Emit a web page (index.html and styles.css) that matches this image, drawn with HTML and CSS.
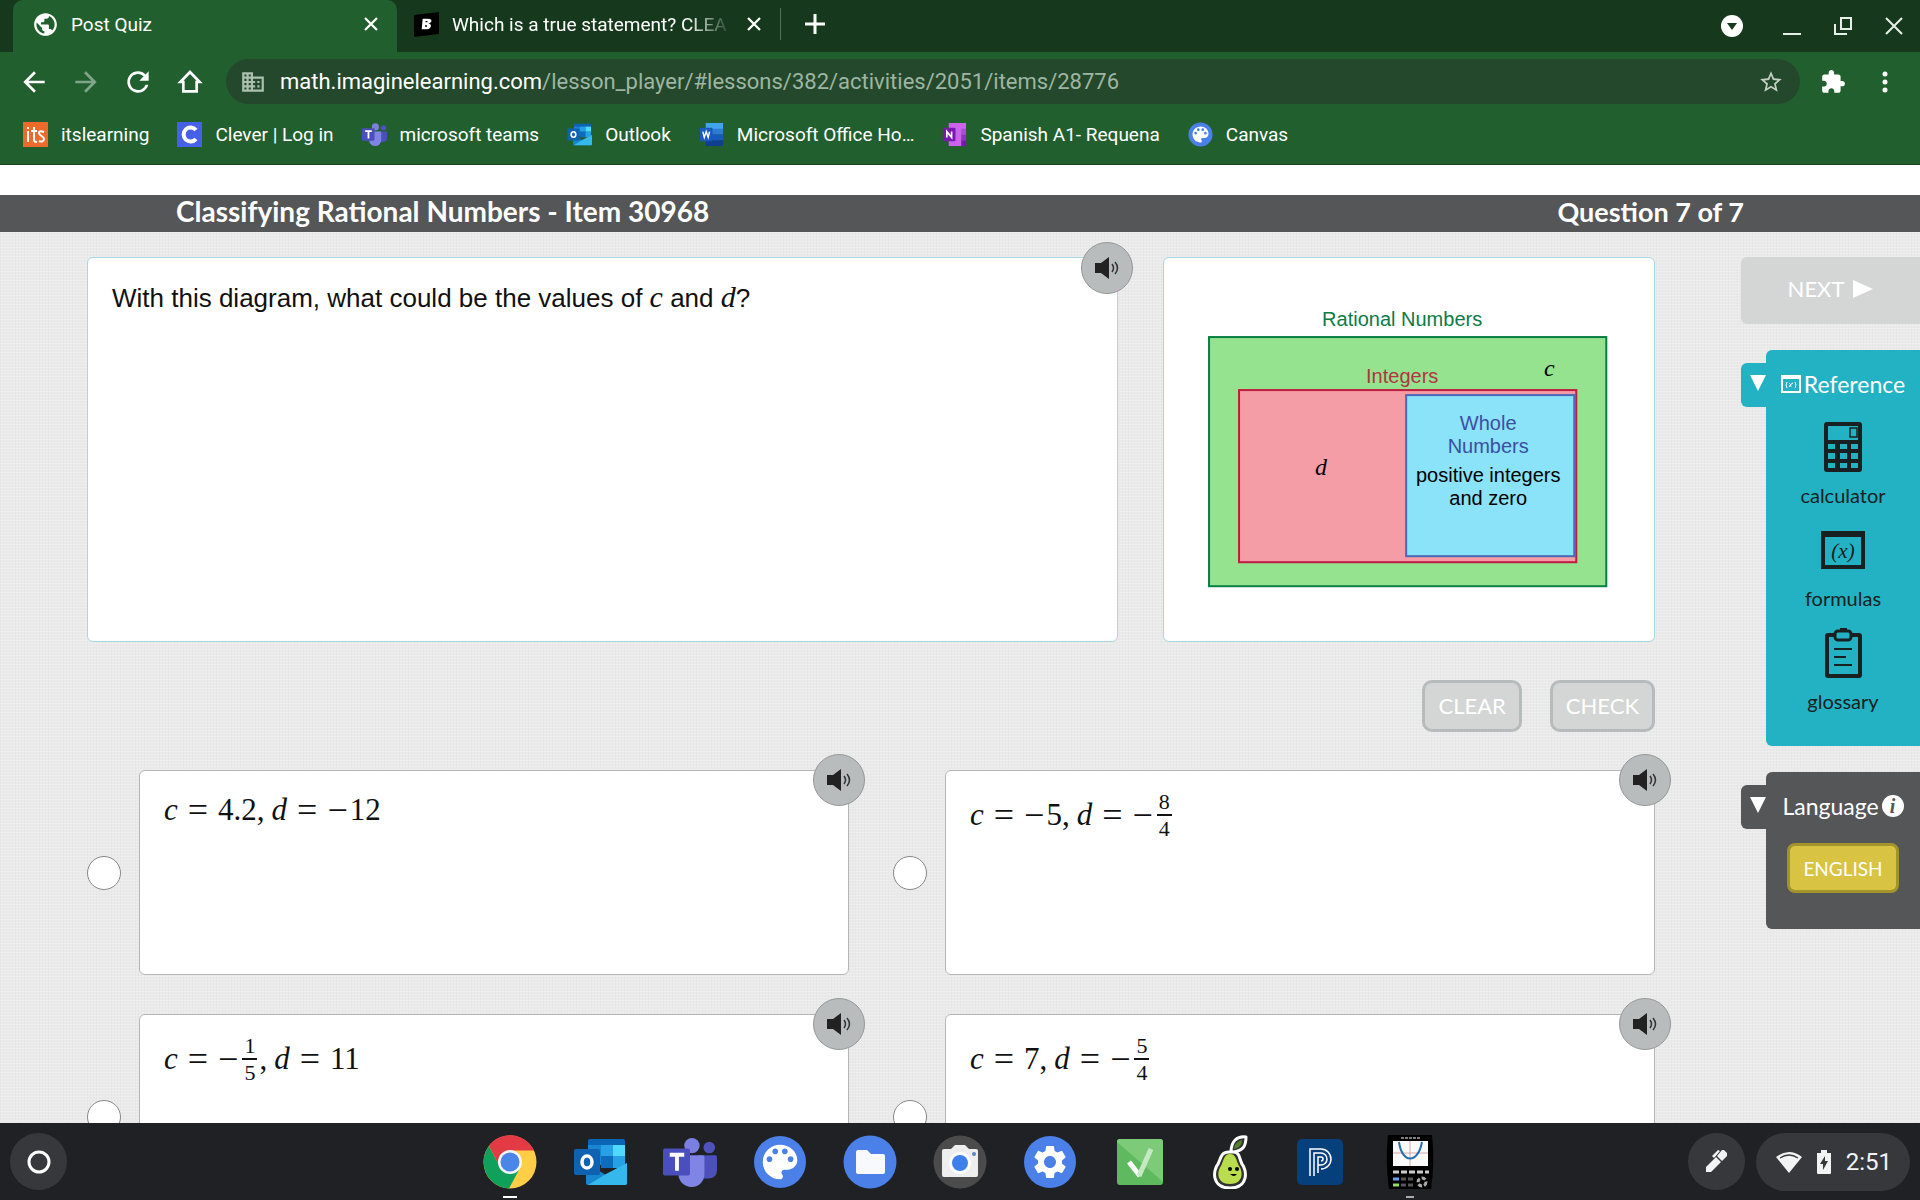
FILE: index.html
```
<!DOCTYPE html>
<html lang="en">
<head>
    <meta charset="UTF-8">
    <meta name="viewport" content="width=device-width, initial-scale=1.0">
    <title>Post Quiz</title>
    <link rel="stylesheet" href="styles.css">
</head>
<body>
    <!-- Shared icons -->
    <svg class="symbols" aria-hidden="true">
        <symbol id="close" viewBox="0 0 24 24"><path d="M4 4L20 20M20 4L4 20" stroke="currentColor" stroke-width="3"/></symbol>
        <symbol id="speaker" viewBox="0 0 26 26">
            <path d="M1 8h6l8-6v22l-8-6H1z" fill="#222"/>
            <path d="M18 9q3 4 0 8M21 7q5 6 0 12" fill="none" stroke="#333" stroke-width="1.5"/>
        </symbol>
        <symbol id="palette" viewBox="0 0 54 54">
            <circle cx="27" cy="27" r="26" fill="#4a80e8"/>
            <path transform="translate(4 4) scale(1.92)" fill="#fff" d="M12 3c-4.97 0-9 4.03-9 9s4.03 9 9 9c.83 0 1.5-.67 1.5-1.5 0-.39-.15-.74-.39-1.01-.23-.26-.38-.61-.38-.99 0-.83.67-1.5 1.5-1.5H16c2.76 0 5-2.24 5-5 0-4.42-4.03-8-9-8zm-5.5 9c-.83 0-1.5-.67-1.5-1.5S5.67 9 6.5 9 8 9.67 8 10.5 7.33 12 6.5 12zm3-4C8.67 8 8 7.33 8 6.5S8.67 5 9.5 5s1.5.67 1.5 1.5S10.33 8 9.5 8zm5 0c-.83 0-1.5-.67-1.5-1.5S13.67 5 14.5 5s1.5.67 1.5 1.5S15.33 8 14.5 8zm3 4c-.83 0-1.5-.67-1.5-1.5S16.67 9 17.5 9s1.5.67 1.5 1.5-.67 1.5-1.5 1.5z"/>
        </symbol>
        <symbol id="outlook" viewBox="0 0 54 54">
            <path fill="#0a66b5" d="M17 4h33a2 2 0 0 1 2 2v8H15V6a2 2 0 0 1 2-2z"/>
            <path fill="#1a85d3" d="M15 10h13v20H15z"/><path fill="#28a0e6" d="M28 10h12v11H28z"/><path fill="#50d9ff" d="M40 10h12v11H40z"/>
            <path fill="#0f6cbd" d="M28 21h12v12H28z"/><path fill="#28a0e6" d="M40 21h12v12H40z"/>
            <path fill="#1785d0" d="M13 28l20 12 21-12v20a2 2 0 0 1-2 2H15a2 2 0 0 1-2-2z"/>
            <path fill="#35b8ec" d="M54 28v20a2 2 0 0 1-2 2H15L33 39z"/>
            <rect x="1" y="14" width="26" height="26" rx="2" fill="#0f62b0"/>
            <ellipse cx="14" cy="27" rx="5" ry="6" fill="none" stroke="#fff" stroke-width="3.5"/>
        </symbol>
        <symbol id="teams" viewBox="0 0 56 54">
            <circle cx="48" cy="12" r="6" fill="#4f52b8"/><circle cx="30" cy="10" r="8" fill="#7b7fe0"/>
            <path fill="#4b50bb" d="M36 20h18a2 2 0 0 1 2 2v13q0 9-9 9h-8z"/>
            <path fill="#7f84e5" d="M16 20h25a2 2 0 0 1 2 2v17a13 13 0 0 1-27 1z"/>
            <rect x="0" y="13" width="28" height="28" rx="2" fill="#4b4fbd"/>
            <path d="M7 19.500h15M14.500 19v17" stroke="#fff" stroke-width="4"/>
        </symbol>
        <symbol id="office" viewBox="0 0 24 26">
            <path fill="#41a5ee" d="M6 1h18v8H6z"/><path fill="#2b7cd3" d="M6 7h18v6H6z"/><path fill="#185abd" d="M6 13h18v6H6z"/><path fill="#103f91" d="M6 19h18v6H6z"/>
            <rect y="6" width="13" height="14" rx="1" fill="#185abd"/>
            <path d="M3 10l1.500 6 2-6 2 6L10 10" fill="none" stroke="#fff" stroke-width="1.500"/>
        </symbol>
        <symbol id="onenote" viewBox="0 0 24 26">
            <path fill="#ca64ea" d="M6 1h18v24H6z"/><path fill="#ae4bd5" d="M19 7h5v6h-5z"/><path fill="#9332bf" d="M19 13h5v6h-5z"/><path fill="#7719aa" d="M19 19h5v6h-5z"/>
            <rect y="6" width="13" height="14" rx="1" fill="#7719aa"/>
            <path d="M4 16v-6l5 6v-6" fill="none" stroke="#fff" stroke-width="1.700"/>
        </symbol>
    </svg>

    <!-- Browser window -->
    <header class="browser">
        <div class="tab-strip">
            <div class="tab active">
                <svg class="tab-icon" viewBox="1 1 22 22"><path fill="#fff" d="M12 2C6.480 2 2 6.480 2 12s4.480 10 10 10 10-4.480 10-10S17.520 2 12 2zm-1 17.930c-3.950-.49-7-3.850-7-7.930 0-.62.08-1.210.21-1.790L9 15v1c0 1.100.9 2 2 2v1.930zm6.900-2.540c-.26-.81-1-1.390-1.900-1.390h-1v-3c0-.55-.45-1-1-1H8v-2h2c.55 0 1-.45 1-1V7h2c1.100 0 2-.9 2-2v-.41c2.930 1.190 5 4.060 5 7.410 0 2.080-.8 3.970-2.100 5.390z"/></svg>
                <span class="tab-title">Post Quiz</span>
                <button class="icon-button" aria-label="Close tab"><svg width="18" height="18"><use href="#close"/></svg></button>
            </div>
            <div class="tab">
                <svg class="tab-icon" viewBox="0 0 26 26"><path d="M0 3L26 0v23L0 26z"/><path d="M9 7h5q5 0 4 3-1 2-3 2 4 1 2 4-1 2-5 2H8z" fill="#fff"/><path d="M12 10h2M11.500 14.500h2" stroke="#000" stroke-width="1.500"/></svg>
                <span class="tab-title fade">Which is a true statement? CLEA</span>
                <button class="icon-button" aria-label="Close tab"><svg width="18" height="18"><use href="#close"/></svg></button>
            </div>
            <button class="icon-button new-tab" aria-label="New tab"><svg width="20" height="20" viewBox="0 0 20 20"><path d="M10 0v20M0 10h20" stroke="#fff" stroke-width="3"/></svg></button>
            <div class="window-buttons">
                <button class="icon-button" aria-label="Tab search"><svg width="24" height="24" viewBox="0 0 24 24"><circle cx="12" cy="12" r="11" fill="#fff"/><path d="M7 9h10l-5 7z" fill="#16391d"/></svg></button>
                <button class="icon-button" aria-label="Minimize"><svg width="20" height="20" viewBox="0 0 20 20"><path d="M1 18h18" stroke="#e8efe8" stroke-width="2"/></svg></button>
                <button class="icon-button" aria-label="Restore"><svg width="20" height="20" viewBox="0 0 20 20"><path d="M8 2h10v11H8zM2 8v10h12" fill="none" stroke="#e8efe8" stroke-width="2"/></svg></button>
                <button class="icon-button" aria-label="Close window"><svg width="20" height="20" viewBox="0 0 20 20"><path d="M2 2l16 16M18 2L2 18" stroke="#e8efe8" stroke-width="2"/></svg></button>
            </div>
        </div>

        <nav class="toolbar">
            <button class="icon-button nav-button" aria-label="Back"><svg viewBox="0 0 24 24"><path fill="#fff" d="M20 11H7.830l5.590-5.590L12 4l-8 8 8 8 1.410-1.410L7.830 13H20z"/></svg></button>
            <button class="icon-button nav-button" aria-label="Forward"><svg viewBox="0 0 24 24"><path fill="#81a588" d="M4 11h12.170l-5.590-5.590L12 4l8 8-8 8-1.410-1.410L16.170 13H4z"/></svg></button>
            <button class="icon-button nav-button" aria-label="Reload"><svg viewBox="0 0 24 24"><path fill="#fff" d="M17.650 6.350C16.200 4.900 14.210 4 12 4c-4.420 0-7.990 3.580-7.990 8s3.570 8 7.990 8c3.730 0 6.840-2.550 7.730-6h-2.080c-.82 2.330-3.040 4-5.650 4-3.310 0-6-2.690-6-6s2.690-6 6-6c1.660 0 3.140.69 4.220 1.780L13 11h7V4l-2.350 2.350z"/></svg></button>
            <button class="icon-button nav-button" aria-label="Home"><svg viewBox="0 0 24 24"><path fill="none" stroke="#fff" stroke-width="2" d="M12 4.500l-7.200 7.500H7v7h10v-7h2.200z"/></svg></button>
            <div class="address-bar">
                <svg width="26" height="26" viewBox="0 0 24 24"><path fill="#adc0b0" d="M12 7V3H2v18h20V7H12zM6 19H4v-2h2v2zm0-4H4v-2h2v2zm0-4H4V9h2v2zm0-4H4V5h2v2zm4 12H8v-2h2v2zm0-4H8v-2h2v2zm0-4H8V9h2v2zm0-4H8V5h2v2zm10 12h-8v-2h2v-2h-2v-2h2v-2h-2V9h8v10zm-2-8h-2v2h2v-2zm0 4h-2v2h2v-2z"/></svg>
                <span class="url"><b>math.imaginelearning.com</b>/lesson_player/#lessons/382/activities/2051/items/28776</span>
                <button class="icon-button" aria-label="Bookmark this page"><svg width="26" height="26" viewBox="0 0 24 24"><path fill="#c3cfc5" d="M22 9.240l-7.190-.62L12 2 9.190 8.630 2 9.240l5.460 4.730L5.820 21 12 17.270 18.180 21l-1.630-7.030L22 9.240zM12 15.400l-3.760 2.270 1-4.280-3.320-2.880 4.380-.38L12 6.100l1.710 4.040 4.380.38-3.320 2.880 1 4.280L12 15.400z"/></svg></button>
            </div>
            <button class="icon-button" aria-label="Extensions"><svg width="26" height="26" viewBox="0 0 24 24"><path fill="#fff" d="M20.500 11H19V7c0-1.100-.9-2-2-2h-4V3.500C13 2.120 11.880 1 10.500 1S8 2.120 8 3.500V5H4c-1.100 0-1.990.9-1.990 2v3.800H3.500c1.490 0 2.700 1.210 2.700 2.700s-1.210 2.700-2.700 2.700H2V20c0 1.100.9 2 2 2h3.800v-1.500c0-1.490 1.210-2.700 2.700-2.700s2.700 1.210 2.700 2.700V22H17c1.100 0 2-.9 2-2v-4h1.500c1.380 0 2.500-1.120 2.500-2.500S21.880 11 20.500 11z"/></svg></button>
            <button class="icon-button" aria-label="Menu"><svg width="26" height="26" viewBox="0 0 26 26" fill="#fff"><circle cx="13" cy="5" r="2.500"/><circle cx="13" cy="13" r="2.500"/><circle cx="13" cy="21" r="2.500"/></svg></button>
        </nav>

        <nav class="bookmarks">
            <a href="#"><svg viewBox="0 0 25 25"><path fill="#ee6a2b" d="M0 0h25v25H0z"/><path d="M5 9v11M5 5v2M11 5v13q0 2 3 2M8 9h6M21 10q-5-2-5 1c0 3 5 3 5 6s-3 3-5 2" fill="none" stroke="#fff" stroke-width="2"/></svg>itslearning</a>
            <a href="#"><svg viewBox="0 0 25 25"><path fill="#4661e8" d="M0 0h25v25H0z"/><path d="M19 8a7 7 0 1 0 0 9" fill="none" stroke="#fff" stroke-width="4"/></svg>Clever | Log in</a>
            <a href="#"><svg><use href="#teams"/></svg>microsoft teams</a>
            <a href="#"><svg><use href="#outlook"/></svg>Outlook</a>
            <a href="#"><svg><use href="#office"/></svg>Microsoft Office Ho…</a>
            <a href="#"><svg><use href="#onenote"/></svg>Spanish A1- Requena</a>
            <a href="#"><svg><use href="#palette"/></svg>Canvas</a>
        </nav>
    </header>

    <!-- Lesson player -->
    <main class="player">
        <div class="title-bar">
            <h1>Classifying Rational Numbers - Item 30968</h1>
            <h2>Question 7 of 7</h2>
        </div>

        <div class="lesson">
            <section class="quiz">
                <div class="prompt">
                    <div class="question card">
                        <p>With this diagram, what could be the values of <i>c</i> and <i>d</i>?</p>
                        <button class="audio" aria-label="Read question"><svg><use href="#speaker"/></svg></button>
                    </div>
                    <div class="diagram card">
                        <svg viewBox="0 0 490 383">
                            <rect x="45" y="79" width="397" height="249" fill="#95e28f" stroke="#087f42" stroke-width="2"/>
                            <rect x="75" y="132" width="337" height="172" fill="#f59da6" stroke="#be1c42" stroke-width="2"/>
                            <rect x="242" y="137" width="168" height="161" fill="#8ae3f8" stroke="#4b67b5" stroke-width="2"/>
                            <text x="238" y="68" fill="#0b7c44">Rational Numbers</text>
                            <text x="238" y="125" fill="#b13543">Integers</text>
                            <text x="324" y="172" fill="#3b4fa3">Whole</text>
                            <text x="324" y="195" fill="#3b4fa3">Numbers</text>
                            <text x="324" y="224">positive integers</text>
                            <text x="324" y="247">and zero</text>
                            <text x="385" y="118" class="letter">c</text>
                            <text x="157" y="217" class="letter">d</text>
                        </svg>
                    </div>
                </div>

                <div class="actions">
                    <button disabled>CLEAR</button>
                    <button disabled>CHECK</button>
                </div>

                <div class="answers">
                    <div class="answer">
                        <input type="radio" name="answer" id="answer1">
                        <label class="card" for="answer1"><span class="math"><i>c</i><span class="op">=</span>4.2<span class="comma">,</span><i>d</i><span class="op">=</span><span class="minus">−</span>12</span></label>
                        <button class="audio" aria-label="Read answer 1"><svg><use href="#speaker"/></svg></button>
                    </div>
                    <div class="answer">
                        <input type="radio" name="answer" id="answer2">
                        <label class="card" for="answer2"><span class="math"><i>c</i><span class="op">=</span><span class="minus">−</span>5<span class="comma">,</span><i>d</i><span class="op">=</span><span class="minus">−</span><span class="fraction"><span>8</span><span>4</span></span></span></label>
                        <button class="audio" aria-label="Read answer 2"><svg><use href="#speaker"/></svg></button>
                    </div>
                    <div class="answer">
                        <input type="radio" name="answer" id="answer3">
                        <label class="card" for="answer3"><span class="math"><i>c</i><span class="op">=</span><span class="minus">−</span><span class="fraction"><span>1</span><span>5</span></span><span class="comma">,</span><i>d</i><span class="op">=</span>11</span></label>
                        <button class="audio" aria-label="Read answer 3"><svg><use href="#speaker"/></svg></button>
                    </div>
                    <div class="answer">
                        <input type="radio" name="answer" id="answer4">
                        <label class="card" for="answer4"><span class="math"><i>c</i><span class="op">=</span>7<span class="comma">,</span><i>d</i><span class="op">=</span><span class="minus">−</span><span class="fraction"><span>5</span><span>4</span></span></span></label>
                        <button class="audio" aria-label="Read answer 4"><svg><use href="#speaker"/></svg></button>
                    </div>
                </div>
            </section>

            <aside class="sidebar">
                <button class="next" disabled>NEXT <svg width="20" height="18" viewBox="0 0 20 18"><path d="M0 0l20 9-20 9z" fill="#fff"/></svg></button>

                <div class="drawer reference">
                    <button class="toggle" aria-label="Collapse reference"><svg width="16" height="16" viewBox="0 0 16 16"><path d="M0 0h16L8 16z" fill="#fff"/></svg></button>
                    <div class="panel">
                        <h3><svg width="20" height="18" viewBox="0 0 20 18"><path d="M1 1h18v16H1zM1 3h18" fill="none" stroke="#fff" stroke-width="2"/><path d="M6 7q-2 3 0 6M14 7q2 3 0 6M8 8q2 1 2 4M12 8q-3 1-4 4" fill="none" stroke="#fff"/></svg>Reference</h3>
                        <button class="tool">
                            <svg viewBox="0 0 44 50"><rect x="3" width="38" height="50" rx="3" fill="#182022"/><path fill="#22b2c4" d="M7 4h30v14H7zM7 22h7v5H7zM19 22h7v5h-7zM30 22h7v5h-7zM7 31h7v6H7zM19 31h7v6h-7zM30 31h7v6h-7zM7 41h7v5H7zM19 41h7v5h-7zM30 41h7v5h-7z"/><rect x="29" y="6" width="7" height="9" fill="none" stroke="#182022" stroke-width="1.500"/></svg>
                            calculator
                        </button>
                        <button class="tool">
                            <svg viewBox="0 0 44 50"><path d="M2 8h40v34H2zM2 10h40" fill="none" stroke="#182022" stroke-width="4"/><text x="22" y="33" class="fx" fill="#182022">(x)</text></svg>
                            formulas
                        </button>
                        <button class="tool">
                            <svg viewBox="0 0 44 50" fill="none" stroke="#182022" stroke-width="4"><rect x="6" y="7" width="33" height="41" rx="1"/><rect x="14" y="3" width="16" height="9" rx="3" fill="#22b2c4" stroke-width="3"/><path d="M19 2h7" /><path d="M13 21h18M13 29h12M13 37h18" stroke-width="2"/></svg>
                            glossary
                        </button>
                    </div>
                </div>

                <div class="drawer language">
                    <button class="toggle" aria-label="Collapse language"><svg width="16" height="16" viewBox="0 0 16 16"><path d="M0 0h16L8 16z" fill="#fff"/></svg></button>
                    <div class="panel">
                        <h3>Language<span class="info">i</span></h3>
                        <button class="english">ENGLISH</button>
                    </div>
                </div>
            </aside>
        </div>
    </main>

    <!-- Shelf -->
    <footer class="shelf">
        <button class="round" aria-label="Launcher"><svg width="26" height="26" viewBox="0 0 26 26"><circle cx="13" cy="13" r="10" fill="none" stroke="#fff" stroke-width="3"/></svg></button>
        <div class="apps">
            <button class="icon-button running" aria-label="Chrome"><svg viewBox="0 0 54 54"><circle cx="27" cy="27" r="26.500" fill="#ffcd46"/><path fill="#e33b45" d="M27 27L6 10.500A26.500 26.500 0 0 1 51 15.500H27z"/><path fill="#0fa05c" d="M6 11A26.500 26.500 0 0 0 26 53.500L37 33l-20-1z"/><path fill="#e33b45" d="M6 11l11 21 10-5V15.500L10 7z"/><circle cx="27" cy="27" r="12" fill="#f4f6fa"/><circle cx="27" cy="27" r="9.500" fill="#4a85e8"/></svg></button>
            <button class="icon-button" aria-label="Outlook"><svg><use href="#outlook"/></svg></button>
            <button class="icon-button" aria-label="Teams"><svg><use href="#teams"/></svg></button>
            <button class="icon-button" aria-label="Canvas"><svg><use href="#palette"/></svg></button>
            <button class="icon-button" aria-label="Files"><svg viewBox="0 0 54 54"><circle cx="27" cy="27" r="26.500" fill="#4a80e8"/><path fill="#f7f9fd" d="M15 15h9l4 4h12a2 2 0 0 1 2 2v16a2 2 0 0 1-2 2H15a2 2 0 0 1-2-2V17a2 2 0 0 1 2-2z"/></svg></button>
            <button class="icon-button" aria-label="Camera"><svg viewBox="0 0 54 54"><circle cx="27" cy="27" r="26.500" fill="#4b4b4b"/><path fill="#eee" d="M11 14h7l4-4h10l4 4h7a2 2 0 0 1 2 2v24a2 2 0 0 1-2 2H11a2 2 0 0 1-2-2V16a2 2 0 0 1 2-2z"/><circle cx="27" cy="28" r="11" fill="#fff"/><circle cx="27" cy="28" r="8" fill="#3d80ea"/><circle cx="41" cy="19" r="2" fill="#5a84c8"/></svg></button>
            <button class="icon-button" aria-label="Settings"><svg viewBox="0 0 54 54"><circle cx="27" cy="27" r="26" fill="#4a80e8"/><path transform="translate(7 7) scale(1.667)" fill="#fff" d="M19.140 12.940c.04-.3.06-.61.06-.94 0-.32-.02-.64-.07-.94l2.030-1.580a.49.49 0 0 0 .12-.61l-1.920-3.320a.488.488 0 0 0-.59-.22l-2.390.96c-.5-.38-1.030-.7-1.620-.94l-.36-2.540a.484.484 0 0 0-.48-.41h-3.840c-.24 0-.43.17-.47.41l-.36 2.540c-.59.24-1.130.57-1.620.94l-2.390-.96c-.22-.08-.47 0-.59.22L2.740 8.870c-.12.21-.08.47.12.61l2.030 1.580c-.05.3-.09.63-.09.94s.02.64.07.94l-2.030 1.580a.49.49 0 0 0-.12.61l1.920 3.320c.12.22.37.29.59.22l2.390-.96c.5.38 1.030.7 1.620.94l.36 2.540c.05.24.24.41.48.41h3.840c.24 0 .44-.17.47-.41l.36-2.540c.59-.24 1.130-.56 1.620-.94l2.390.96c.22.08.47 0 .59-.22l1.920-3.320c.12-.22.07-.47-.12-.61l-2.010-1.580zM12 15.600c-1.980 0-3.600-1.620-3.600-3.600s1.620-3.600 3.600-3.600 3.600 1.620 3.600 3.600-1.620 3.600-3.600 3.600z"/></svg></button>
            <button class="icon-button" aria-label="Checkmark"><svg viewBox="0 0 54 54"><rect x="4" y="4" width="46" height="46" rx="3" fill="#5eb95f"/><path d="M4 7q0-3 3-3h40q3 0 3 3v40z" fill="#7dca78"/><path d="M16 27l11 14" stroke="#fff" stroke-width="5"/><path d="M26 41l12-27" stroke="#c5e9c2" stroke-width="5"/></svg></button>
            <button class="icon-button" aria-label="Pear Deck"><svg viewBox="0 0 54 54"><path d="M26 17C18 17 18 23 15 29c-5 6-7 24 12 24s17-18 12-24c-3-6-2-12-9-12 11-1 13-7 13-15-9-1-15 4-15 15z" fill="#333" stroke="#fff" stroke-width="3" stroke-linejoin="round"/><path d="M27 19c-6 0-6 6-9 12-4 5-5 18 9 18s13-13 9-18c-3-6-3-12-9-12z" fill="#b9dd4d"/><path d="M31 14c0-5 4-8 8-9 0 5-3 8-8 9z" fill="#53812f"/><circle cx="27" cy="34" r="2"/><circle cx="34" cy="34" r="2"/><path d="M27 39h7q-3 4-7 0z"/></svg></button>
            <button class="icon-button" aria-label="PowerSchool"><svg viewBox="0 0 54 54"><rect x="4" y="4" width="46" height="46" rx="5" fill="#06407c"/><path d="M17 41V14h11a10 10 0 0 1 0 20M21 41V18h7a6 6 0 0 1 0 12h-3M25 38V22h3a2 2 0 0 1 0 4" fill="none" stroke="#fff" stroke-width="1.500"/></svg></button>
            <button class="icon-button running faint" aria-label="Graphing calculator"><svg viewBox="0 0 54 54"><path d="M5 0h44q3 27-1 54H6Q2 27 5 0z"/><path fill="#fafafa" d="M10 6h35v25H10z"/><path d="M27 6v25M10 18h35" stroke="#d7a8a8"/><path d="M16 7c3 22 19 22 23 0" fill="none" stroke="#286fae" stroke-width="2"/><path d="M18 3h19" stroke="#aaa" stroke-width="1.500" stroke-dasharray="3 1"/><path d="M10 37h36" stroke="#ccc" stroke-width="3" stroke-dasharray="6 2"/><path d="M10 44h6" stroke="#6c9ff0" stroke-width="3"/><path d="M10 50h6" stroke="#8fe05d" stroke-width="3"/><path d="M18 44h12M18 50h12" stroke="#555" stroke-width="3" stroke-dasharray="5 2"/><circle cx="39" cy="47" r="4" fill="none" stroke="#aaa" stroke-width="3" stroke-dasharray="4 2"/></svg></button>
        </div>
        <div class="status">
            <button class="round" aria-label="Stylus tools"><svg width="26" height="26" viewBox="0 0 26 26"><path d="M3 24v-5L13 9l5 5L8 24zM14 8l5 5 5-5V5l-3-3h-2zM9 8l6-6 2 1-6 7z" fill="#f1f3f4"/></svg></button>
            <button class="tray">
                <svg width="26" height="22" viewBox="0 0 26 22"><path d="M0 6Q13-4 26 6L13 22z" fill="#f1f3f4"/><path d="M4 7Q13 1 22 7" fill="none" stroke="#37383b" stroke-width="1.500"/></svg>
                <svg width="14" height="24" viewBox="0 0 14 24"><path d="M4 0h6v3h4v20q0 1-1 1H1q-1 0-1-1V3h4z" fill="#f1f3f4"/><path d="M8 6l-5 8h3v6l5-9H8z" fill="#37383b"/></svg>
                <span>2:51</span>
            </button>
        </div>
    </footer>
</body>
</html>
```
FILE: styles.css
```
* {
    box-sizing: border-box;
}

body {
    display: flex;
    flex-direction: column;
    height: 100vh;
    margin: 0;
    overflow: hidden;
    font-family: Roboto, sans-serif;
    font-size: 19px;
}

button {
    font: inherit;
    cursor: pointer;
}

svg {
    display: block;
    flex-shrink: 0;
}

.symbols {
    position: absolute;
    width: 0;
    height: 0;
}

.icon-button {
    display: flex;
    padding: 0;
    border: none;
    background: none;
    color: white;
}

/* Browser */
.browser {
    flex-shrink: 0;
    background: #225f2f;
    color: white;
    border-bottom: 1px solid #17411f;
}

.tab-strip {
    display: flex;
    align-items: center;
    height: 52px;
    padding-left: 13px;
    background: #16391d;
}

.tab {
    display: flex;
    align-items: center;
    gap: 13px;
    width: 383px;
    height: 52px;
    padding: 0 17px 4px;
}

.tab.active {
    width: 384px;
    background: #225f2f;
    border-radius: 10px 10px 0 0;
    padding-left: 20px;
}

.tab-icon {
    width: 25px;
    height: 25px;
}

.tab-title {
    flex: 1;
    white-space: nowrap;
}

.fade {
    -webkit-mask-image: linear-gradient(to right, black 84%, transparent);
    mask-image: linear-gradient(to right, black 84%, transparent);
}

.new-tab {
    height: 32px;
    align-items: center;
    padding-left: 24px;
    margin-bottom: 4px;
    border-left: 1px solid #4d7554;
}

.window-buttons {
    display: flex;
    align-items: center;
    gap: 31px;
    margin-left: auto;
    padding-right: 16px;
}

.window-buttons > :first-child {
    margin-right: 7px;
}

.toolbar {
    display: flex;
    align-items: center;
    gap: 20px;
    height: 59px;
    padding: 0 22px 0 18px;
}

.nav-button svg {
    width: 32px;
    height: 32px;
}

.address-bar {
    display: flex;
    flex: 1;
    align-items: center;
    gap: 14px;
    height: 45px;
    padding: 0 16px 0 14px;
    border-radius: 23px;
    background: #24482b;
}

.address-bar + .icon-button {
    margin-right: 6px;
}

.url {
    flex: 1;
    font-size: 22px;
    color: #9fb5a3;
}

.url b {
    font-weight: normal;
    color: white;
}

.bookmarks {
    display: flex;
    align-items: center;
    gap: 28px;
    height: 53px;
    padding: 0 23px 6px;
}

.bookmarks a {
    display: flex;
    align-items: center;
    gap: 13px;
    color: white;
    text-decoration: none;
}

.bookmarks svg {
    width: 25px;
    height: 25px;
}

/* Lesson player */
.player {
    flex: 1;
    min-height: 0;
    padding-top: 30px;
    font-family: Lato, sans-serif;
}

.title-bar {
    display: flex;
    align-items: center;
    justify-content: space-between;
    height: 37px;
    padding: 0 176px 4px;
    background: #545658;
    color: white;
}

.title-bar h1,
.title-bar h2 {
    margin: 0;
    font-size: 28px;
    line-height: 33px;
}

.title-bar h2 {
    font-size: 27px;
}

.lesson {
    display: flex;
    gap: 86px;
    padding: 25px 0 0 87px;
    background:
        repeating-linear-gradient(to bottom, rgba(255, 255, 255, 0.2) 0 1px, transparent 1px 3px),
        repeating-linear-gradient(to right, #e6e6e6 0 1px, #eaeaea 1px 3px);
}

.quiz {
    flex: 1;
}

.card {
    display: block;
    background: white;
    border: 1px solid #b5b7b7;
    border-radius: 6px;
}

.prompt {
    display: grid;
    grid-template-columns: 1030fr 492fr;
    gap: 45px;
}

.prompt .card {
    border-color: #a5d9df;
}

.question {
    position: relative;
    padding: 24px;
    font-family: "Liberation Sans", Arial, sans-serif;
    font-size: 26px;
}

.question p {
    margin: 0;
    line-height: 32px;
    color: #111;
}

.question i {
    font-family: "Liberation Serif", serif;
    font-size: 30px;
    line-height: 30px;
}

.diagram svg {
    width: 100%;
    font-family: "Liberation Sans", Arial, sans-serif;
    font-size: 20px;
    text-anchor: middle;
}

.diagram .letter {
    font-family: "Liberation Serif", serif;
    font-size: 24px;
    font-style: italic;
}

.audio {
    position: absolute;
    top: -16px;
    right: -16px;
    display: flex;
    align-items: center;
    justify-content: center;
    width: 52px;
    height: 52px;
    padding: 0;
    border: 1px solid #949898;
    border-radius: 50%;
    background: #b8bcbc;
}

.audio svg {
    width: 26px;
    height: 26px;
}

.actions {
    display: flex;
    justify-content: flex-end;
    gap: 28px;
    margin: 38px 0;
}

.actions button {
    height: 52px;
    padding: 0 13px 2px;
    border: 3px solid #b7bbbb;
    border-radius: 10px;
    background: #d3d6d5;
    color: white;
    font-size: 22px;
}

.answers {
    display: grid;
    grid-template-columns: 1fr 1fr;
    gap: 39px 44px;
}

.answer {
    position: relative;
    display: flex;
    align-items: center;
    gap: 18px;
}

.answer input {
    appearance: none;
    width: 34px;
    height: 34px;
    margin: 0;
    border: 1px solid #888;
    border-radius: 50%;
    background: white;
}

.answer .card {
    flex: 1;
    height: 205px;
    padding: 18px 24px;
}

.math {
    display: flex;
    align-items: center;
    font-family: "Liberation Serif", serif;
    font-size: 31px;
    line-height: 42px;
    color: #111;
}

.op {
    margin: 0 10px;
    font-size: 36px;
}

.minus {
    margin-right: 2px;
    font-size: 36px;
}

.comma {
    margin-right: 7px;
}

.fraction {
    display: flex;
    flex-direction: column;
    margin: 0 2px;
    font-size: 22px;
    line-height: 25px;
    text-align: center;
}

.fraction span {
    padding: 0 2px;
}

.fraction :last-child {
    border-top: 2px solid #111;
}

/* Sidebar */
.sidebar {
    width: 179px;
    font-size: 20px;
}

.next {
    display: flex;
    align-items: center;
    justify-content: center;
    gap: 9px;
    width: 100%;
    height: 67px;
    padding: 0 6px 4px;
    border: none;
    border-radius: 6px 0 0 6px;
    background: #d3d6d5;
    color: white;
    font-size: 22px;
}

.drawer {
    display: flex;
    align-items: flex-start;
    margin-top: 26px;
}

.toggle {
    display: flex;
    align-items: center;
    justify-content: center;
    width: 25px;
    height: 44px;
    margin-top: 13px;
    padding: 0 0 4px 8px;
    border: none;
    border-radius: 6px 0 0 6px;
}

.panel {
    display: flex;
    flex: 1;
    flex-direction: column;
    align-items: center;
    border-radius: 6px 0 0 6px;
}

.panel h3 {
    display: flex;
    align-items: center;
    gap: 3px;
    margin: 0;
    font-size: 23px;
    font-weight: normal;
    line-height: 28px;
    color: white;
}

.reference .toggle,
.reference .panel {
    background: #22b2c4;
}

.reference .panel {
    padding: 20px 0 33px;
}

.language .toggle,
.language .panel {
    background: #545658;
}

.language .panel {
    padding: 20px 0 36px;
}

.tool {
    display: flex;
    flex-direction: column;
    align-items: center;
    gap: 11px;
    margin-top: 18px;
    padding: 0;
    border: none;
    background: none;
    color: #182022;
    line-height: 24px;
}

.reference h3 {
    margin-bottom: 6px;
}

.tool svg {
    width: 44px;
    height: 50px;
}

.fx {
    font-family: "Liberation Serif", serif;
    font-size: 21px;
    font-style: italic;
    text-anchor: middle;
}

.info {
    width: 22px;
    height: 22px;
    border-radius: 50%;
    background: white;
    color: #545658;
    font: italic bold 20px/22px "Liberation Serif", serif;
    text-align: center;
}

.english {
    width: 112px;
    height: 50px;
    margin-top: 23px;
    padding: 0;
    border: 3px solid #a2942b;
    border-radius: 8px;
    background: #d9c343;
    color: white;
    font-size: 19px;
}

/* Shelf */
.shelf {
    position: relative;
    display: grid;
    grid-template-columns: 1fr auto 1fr;
    align-items: center;
    flex-shrink: 0;
    height: 77px;
    padding: 0 10px;
    background: #202124;
}

.round {
    display: flex;
    align-items: center;
    justify-content: center;
    width: 57px;
    height: 57px;
    padding: 0;
    border: none;
    border-radius: 50%;
    background: #37383b;
}

.apps {
    display: flex;
    gap: 36px;
}

.apps svg {
    width: 54px;
    height: 54px;
}

.running {
    position: relative;
}

.running::after {
    content: "";
    position: absolute;
    left: 20px;
    bottom: -9px;
    width: 14px;
    height: 2px;
    background: white;
}

.faint::after {
    width: 8px;
    left: 23px;
    background: #aaa;
}

.status {
    display: flex;
    justify-content: flex-end;
    gap: 11px;
}

.tray {
    display: flex;
    align-items: center;
    gap: 15px;
    height: 58px;
    padding: 0 18px 0 20px;
    border: none;
    border-radius: 29px;
    background: #37383b;
    color: #f1f3f4;
    font-size: 24px;
}
```
